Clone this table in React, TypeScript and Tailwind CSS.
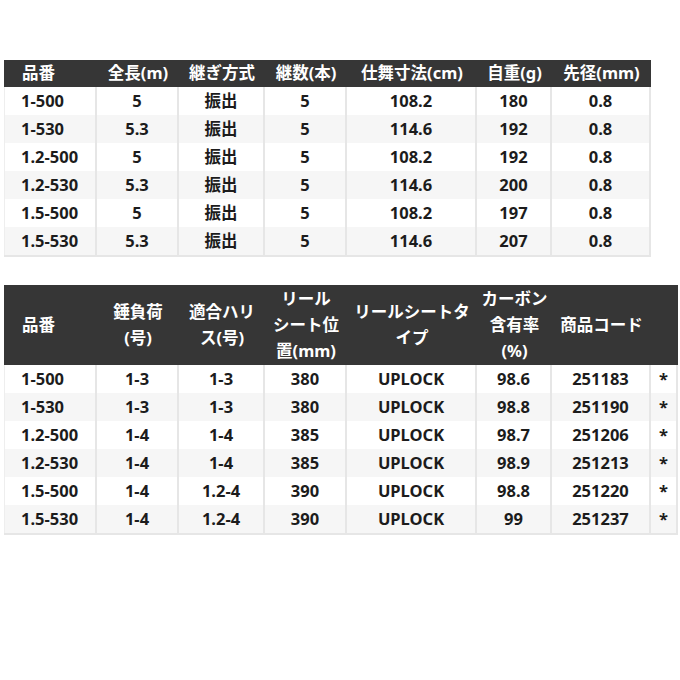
import React from "react";

const font = { fontFamily: '"Noto Sans", "Noto Sans CJK JP", sans-serif' };

const t1Head = ["品番", "全長(m)", "継ぎ方式", "継数(本)", "仕舞寸法(cm)", "自重(g)", "先径(mm)"];
const t1Rows = [
  ["1-500", "5", "振出", "5", "108.2", "180", "0.8"],
  ["1-530", "5.3", "振出", "5", "114.6", "192", "0.8"],
  ["1.2-500", "5", "振出", "5", "108.2", "192", "0.8"],
  ["1.2-530", "5.3", "振出", "5", "114.6", "200", "0.8"],
  ["1.5-500", "5", "振出", "5", "108.2", "197", "0.8"],
  ["1.5-530", "5.3", "振出", "5", "114.6", "207", "0.8"],
];

const t2Head: React.ReactNode[] = [
  "品番",
  <>錘負荷<br />(号)</>,
  <>適合ハリ<br />ス(号)</>,
  <>リール<br />シート位<br />置(mm)</>,
  <>リールシートタ<br />イプ</>,
  <>カーボン<br />含有率<br />(%)</>,
  "商品コード",
  "",
];
const t2Rows = [
  ["1-500", "1-3", "1-3", "380", "UPLOCK", "98.6", "251183", "*"],
  ["1-530", "1-3", "1-3", "380", "UPLOCK", "98.8", "251190", "*"],
  ["1.2-500", "1-4", "1-4", "385", "UPLOCK", "98.7", "251206", "*"],
  ["1.2-530", "1-4", "1-4", "385", "UPLOCK", "98.9", "251213", "*"],
  ["1.5-500", "1-4", "1.2-4", "390", "UPLOCK", "98.8", "251220", "*"],
  ["1.5-530", "1-4", "1.2-4", "390", "UPLOCK", "99", "251237", "*"],
];

function BodyRows({ rows }: { rows: string[][] }) {
  return (
    <>
      {rows.map((r, ri) =>
        r.map((c, ci) => (
          <div
            key={ri + "-" + ci}
            className={
              "h-[28px] flex items-center text-[16.5px] font-bold text-[#1c1c1c] border-r-2 border-[#e6e6e6] " +
              (ri % 2 === 1 ? "bg-[#f6f6f6] " : "bg-white ") +
              (ci === 0 ? "justify-start pl-[16px] border-l border-l-[#eeeeee]" : "justify-center")
            }
          >
            {c}
          </div>
        ))
      )}
    </>
  );
}

export default function App() {
  return (
    <div className="w-[680px] h-[680px] bg-white relative" style={font}>
      <div className="pt-[60px] pl-[4px]">
        <div className="w-[647px]">
          <div className="grid grid-cols-[93px_82px_86px_82px_130px_75px_99px]">
            {t1Head.map((h, i) => (
              <div
                key={i}
                className={
                  "h-[27px] bg-[#363636] text-white text-[16.5px] font-bold flex items-center " +
                  (i === 0 ? "justify-start pl-[18px]" : "justify-center")
                }
              >
                {h}
              </div>
            ))}
            <BodyRows rows={t1Rows} />
          </div>
          <div className="h-[2px] bg-[#e6e6e6]" />
        </div>

        <div className="w-[674px] mt-[28px]">
          <div className="grid grid-cols-[93px_82px_86px_82px_130px_75px_99px_27px]">
            {t2Head.map((h, i) => (
              <div
                key={i}
                className={
                  "h-[80px] bg-[#363636] text-white text-[16.5px] font-bold leading-[26px] flex items-center " +
                  (i === 0 ? "justify-start pl-[18px]" : "justify-center text-center")
                }
              >
                <div>{h}</div>
              </div>
            ))}
            <BodyRows rows={t2Rows} />
          </div>
          <div className="h-[2px] bg-[#e6e6e6]" />
        </div>
      </div>
    </div>
  );
}
